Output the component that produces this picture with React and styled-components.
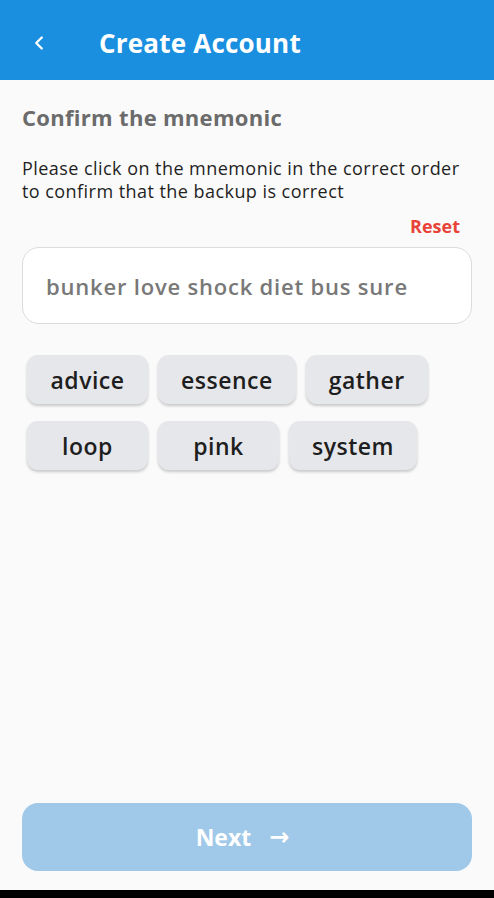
import styled, { createGlobalStyle } from "styled-components";
import { ChevronLeft } from "lucide-react";

const GlobalStyle = createGlobalStyle`
  html, body {
    margin: 0;
    padding: 0;
    background: #fafafa;
  }
  * {
    box-sizing: border-box;
  }
`;

const Screen = styled.div`
  width: 494px;
  height: 898px;
  display: flex;
  flex-direction: column;
  background: #fafafa;
  font-family: "Open Sans", "Noto Sans", sans-serif;
`;

const Header = styled.header`
  height: 80px;
  flex-shrink: 0;
  display: flex;
  align-items: center;
  padding: 6px 0 0 27px;
  background: #1a8fe0;
  color: #fff;
`;

const BackButton = styled.button`
  display: flex;
  align-items: center;
  justify-content: center;
  width: 24px;
  height: 30px;
  padding: 0;
  margin-right: 48px;
  border: none;
  background: transparent;
  color: #fff;
  cursor: pointer;
`;

const Title = styled.h1`
  margin: 0;
  font-size: 26px;
  font-weight: 700;
  letter-spacing: 0.2px;
`;

const Content = styled.main`
  flex: 1;
  display: flex;
  flex-direction: column;
  padding: 22px 22px 0;
`;

const Heading = styled.h2`
  margin: 0;
  font-size: 22px;
  font-weight: 700;
  color: #6b6b6b;
  letter-spacing: 0.3px;
`;

const Hint = styled.p`
  margin: 25px 0 0;
  font-size: 18px;
  line-height: 23px;
  color: #1f1f1f;
  letter-spacing: 0.45px;
`;

const ResetRow = styled.div`
  display: flex;
  justify-content: flex-end;
  margin-top: 11px;
  padding-right: 12px;
`;

const ResetLink = styled.button`
  border: none;
  background: transparent;
  padding: 0;
  font-family: inherit;
  font-size: 18px;
  font-weight: 700;
  color: #e84338;
  cursor: pointer;
`;

const Phrase = styled.div`
  margin-top: 9px;
  height: 77px;
  display: flex;
  align-items: center;
  padding: 0 23px;
  background: #fff;
  border: 1px solid #dcdcdc;
  border-radius: 17px;
  font-size: 22px;
  font-weight: 600;
  color: #787878;
  letter-spacing: 0.8px;
`;

const Chips = styled.div`
  margin-top: 31px;
  padding-left: 5px;
  display: flex;
  flex-wrap: wrap;
  column-gap: 10px;
  row-gap: 17px;
`;

const Chip = styled.button`
  min-width: 121px;
  height: 49px;
  padding: 0 23px;
  border: none;
  border-radius: 11px;
  background: #e6e7ea;
  box-shadow: 0 2px 3px rgba(0, 0, 0, 0.2);
  font-family: inherit;
  font-size: 23px;
  font-weight: 600;
  color: #1e1e1e;
  letter-spacing: 0.5px;
  cursor: pointer;
`;

const Footer = styled.footer`
  padding: 0 22px 19px;
`;

const NextButton = styled.button`
  width: 100%;
  height: 68px;
  display: flex;
  align-items: center;
  justify-content: center;
  gap: 18px;
  border: none;
  border-radius: 16px;
  background: #a0c8e8;
  color: #fff;
  font-family: inherit;
  font-size: 23px;
  font-weight: 700;
  padding: 0 9px 0 0;
`;

const Arrow = styled.span`
  font-size: 24px;
  font-family: "DejaVu Sans", sans-serif;
`;

const NavBar = styled.div`
  height: 8px;
  flex-shrink: 0;
  background: #000;
`;

const words = ["advice", "essence", "gather", "loop", "pink", "system"];

const App = () => {
  return (
    <>
      <GlobalStyle />
      <Screen>
        <Header>
          <BackButton aria-label="Back">
            <ChevronLeft size={22} strokeWidth={2.6} />
          </BackButton>
          <Title>Create Account</Title>
        </Header>
        <Content>
          <Heading>Confirm the mnemonic</Heading>
          <Hint>
            Please click on the mnemonic in the correct order to confirm that
            the backup is correct
          </Hint>
          <ResetRow>
            <ResetLink>Reset</ResetLink>
          </ResetRow>
          <Phrase>bunker love shock diet bus sure</Phrase>
          <Chips>
            {words.map((w) => (
              <Chip key={w}>{w}</Chip>
            ))}
          </Chips>
        </Content>
        <Footer>
          <NextButton disabled>
            Next <Arrow>→</Arrow>
          </NextButton>
        </Footer>
        <NavBar />
      </Screen>
    </>
  );
};

export default App;
